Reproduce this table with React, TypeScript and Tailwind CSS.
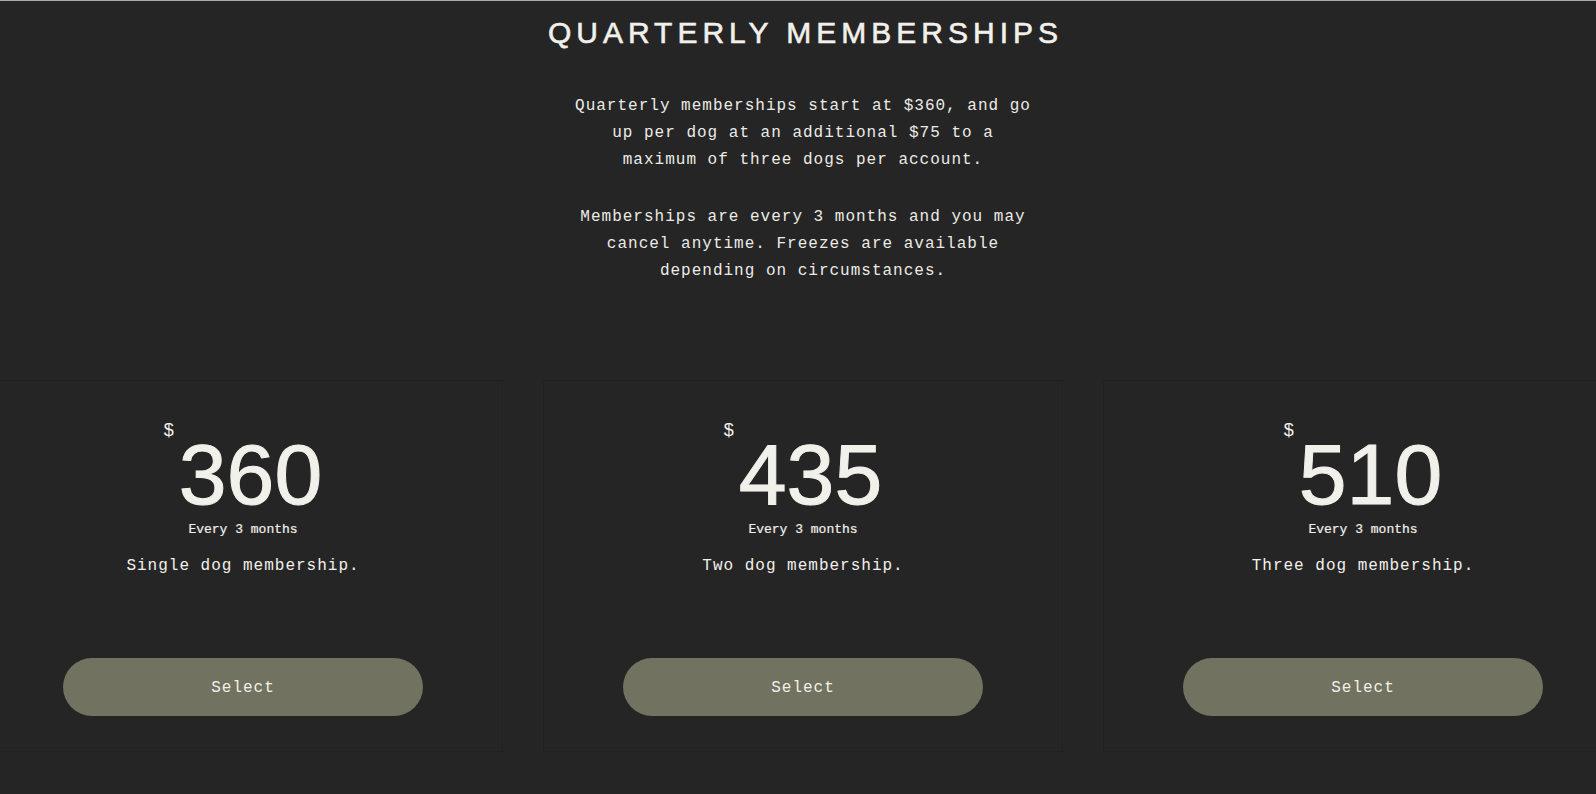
const plans = [
  { price: 360, label: "Single dog membership." },
  { price: 435, label: "Two dog membership." },
  { price: 510, label: "Three dog membership." },
];

const mono = "font-['Liberation_Mono',_'DejaVu_Sans_Mono',_monospace]";
const sans = "font-['Liberation_Sans',_Arial,_sans-serif]";

function PlanCard({ price, label }: { price: number; label: string }) {
  return (
    <div className="w-[520px] shrink-0 border border-[#212121] bg-[#252525] px-[79px] pt-[40px] pb-[35px] flex flex-col items-center text-[#f2f0eb]">
      <div className="flex items-start">
        <span className={`${sans} text-[18px] leading-none`}>$</span>
        <span
          className={`${sans} text-[86px] leading-none tracking-[0px] ml-[5px] mt-[10px] [-webkit-text-stroke:1px_#f2f0eb]`}
        >
          {price}
        </span>
      </div>
      <span className={`${mono} text-[13px] leading-[16px] mt-[5px] [-webkit-text-stroke:0.2px_#f2f0eb]`}>
        Every 3 months
      </span>
      <p className={`${mono} text-[16px] leading-[27px] tracking-[1px] mt-[15px]`}>{label}</p>
      <button
        className={`${mono} mt-[78px] w-full h-[58px] rounded-full bg-[#717360] text-[16px] tracking-[1px] text-[#f2f0eb] pt-[2px]`}
      >
        Select
      </button>
    </div>
  );
}

export default function App() {
  return (
    <main className="min-h-screen w-full overflow-hidden bg-[#252525] border-t border-[#a9a9a9]">
      <div className="w-[1606px] flex flex-col items-center pt-[17px]">
        <h1
          className={`${sans} text-[30px] leading-[30px] tracking-[5px] uppercase text-[#f2f0eb] pl-[5px] [-webkit-text-stroke:0.6px_#f2f0eb]`}
        >
          Quarterly Memberships
        </h1>

        <div className={`${mono} mt-[45px] w-[462px] text-center text-[16px] leading-[27px] tracking-[1px] text-[#ecebe6]`}>
          <p>
            Quarterly memberships start at $360, and go up per dog at an additional $75 to a maximum of three
            dogs per account.
          </p>
          <p className="mt-[30px]">
            Memberships are every 3 months and you may cancel anytime. Freezes are available depending on
            circumstances.
          </p>
        </div>

        <div className="mt-[95px] w-full flex justify-center gap-[40px]">
          {plans.map((plan) => (
            <PlanCard key={plan.price} price={plan.price} label={plan.label} />
          ))}
        </div>
      </div>
    </main>
  );
}
